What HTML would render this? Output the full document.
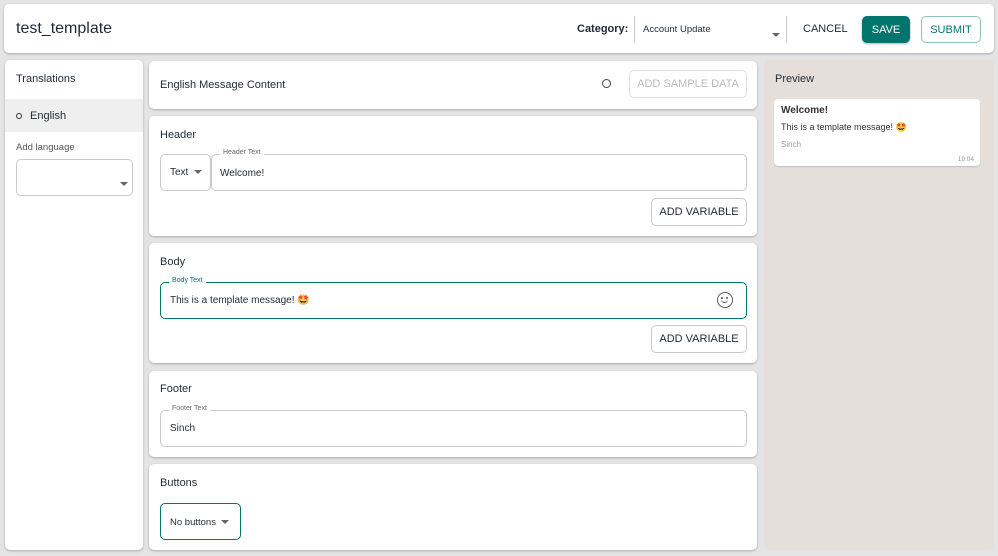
<!DOCTYPE html>
<html><head><style>
*{box-sizing:border-box;margin:0;padding:0}
body{width:998px;height:556px;background:#e4e4e4;font-family:"Liberation Sans",sans-serif;color:#1f2a37;position:relative;overflow:hidden;font-size:11px}
.card{position:absolute;background:#fff;border-radius:5px;box-shadow:0 1px 2px rgba(0,0,0,.25)}
.abs{position:absolute}
.btn{position:absolute;border:1px solid #c9c9c9;border-radius:5px;background:#fff;font-size:11px;display:flex;align-items:center;justify-content:center;color:#1f2a37}
.field{position:absolute;border:1px solid #c9c9c9;border-radius:5px;background:#fff}
.lbl{position:absolute;top:-6px;left:8px;background:#fff;padding:0 3px;font-size:7px;color:#666}
.tri{display:inline-block;width:0;height:0;border-left:4px solid transparent;border-right:4px solid transparent;border-top:4px solid #666}
</style></head><body>
<div class="card" style="left:4px;top:4px;width:990px;height:49px">
 <div class="abs" style="left:12px;top:16px;font-size:16px;color:#1f2a37">test_template</div>
 <div class="abs" style="left:573px;top:19px;font-weight:bold;font-size:11px">Category:</div>
 <div class="abs" style="left:630px;top:12px;width:1px;height:27px;background:#ccc"></div>
 <div class="abs" style="left:639px;top:20px;font-size:9.5px">Account Update</div>
 <div class="abs" style="left:768px;top:24px"><span class="tri"></span></div>
 <div class="abs" style="left:782px;top:12px;width:1px;height:27px;background:#ccc"></div>
 <div class="abs" style="left:799px;top:19px;font-size:11px">CANCEL</div>
 <div class="btn" style="left:858px;top:12px;width:48px;height:27px;background:#00756d;border-color:#00756d;color:#fff;box-shadow:0 1px 2px rgba(0,0,0,.3)">SAVE</div>
 <div class="btn" style="left:917px;top:12px;width:60px;height:27px;border-color:#8fc1bc;color:#00756d">SUBMIT</div>
</div>
<div class="card" style="left:5px;top:60px;width:138px;height:490px">
 <div class="abs" style="left:11px;top:13px;font-size:11px">Translations</div>
 <div class="abs" style="left:0;top:39px;width:138px;height:33px;background:#efefef"></div>
 <div class="abs" style="left:11px;top:53px;width:6px;height:6px;border:1px solid #333;border-radius:50%"></div>
 <div class="abs" style="left:25px;top:50px;font-size:11px">English</div>
 <div class="abs" style="left:11px;top:82px;font-size:9.5px;color:#555">Add language</div>
 <div class="field" style="left:11px;top:99px;width:117px;height:37px"><div class="abs" style="left:103px;top:17px"><span class="tri"></span></div></div>
</div>
<div class="card" style="left:149px;top:61px;width:608px;height:48px">
 <div class="abs" style="left:11px;top:18px;font-size:11px">English Message Content</div>
 <div class="abs" style="left:453px;top:18px;width:9px;height:9px;border:1.5px solid #444;border-radius:50%"></div>
 <div class="btn" style="left:480px;top:9px;width:118px;height:28px;border-color:#e0e0e0;color:#bbb">ADD SAMPLE DATA</div>
</div>
<div class="card" style="left:149px;top:116px;width:608px;height:120px">
 <div class="abs" style="left:11px;top:13px;font-size:11px">Header</div>
 <div class="field" style="left:11px;top:38px;width:51px;height:37px"><div class="abs" style="left:9px;top:12px;font-size:10px">Text <span class="tri" style="margin-left:3px;vertical-align:middle"></span></div></div>
 <div class="field" style="left:62px;top:38px;width:536px;height:37px"><div class="lbl">Header Text</div><div class="abs" style="left:8px;top:13px;font-size:10px">Welcome!</div></div>
 <div class="btn" style="left:502px;top:82px;width:96px;height:28px">ADD VARIABLE</div>
</div>
<div class="card" style="left:149px;top:243px;width:608px;height:120px">
 <div class="abs" style="left:11px;top:13px;font-size:11px">Body</div>
 <div class="field" style="left:11px;top:39px;width:587px;height:37px;border-color:#00756d"><div class="lbl" style="color:#00756d">Body Text</div><div class="abs" style="left:9px;top:12px;font-size:10px">This is a template message! 🤩</div>
 <div class="abs" style="left:556px;top:9px;width:16px;height:16px;border:1.5px solid #555;border-radius:50%"><div class="abs" style="left:3px;top:4px;width:2px;height:2px;background:#555;border-radius:50%"></div><div class="abs" style="left:8px;top:4px;width:2px;height:2px;background:#555;border-radius:50%"></div><div class="abs" style="left:3px;top:6px;width:7px;height:4px;border-bottom:1.5px solid #555;border-radius:0 0 4px 4px"></div></div></div>
 <div class="btn" style="left:502px;top:82px;width:96px;height:28px">ADD VARIABLE</div>
</div>
<div class="card" style="left:149px;top:371px;width:608px;height:86px">
 <div class="abs" style="left:11px;top:12px;font-size:11px">Footer</div>
 <div class="field" style="left:11px;top:39px;width:587px;height:37px"><div class="lbl">Footer Text</div><div class="abs" style="left:9px;top:12px;font-size:10px">Sinch</div></div>
</div>
<div class="card" style="left:149px;top:464px;width:608px;height:86px">
 <div class="abs" style="left:11px;top:13px;font-size:11px">Buttons</div>
 <div class="field" style="left:11px;top:39px;width:81px;height:37px;border-color:#00756d"><div class="abs" style="left:9px;top:13px;font-size:9.5px">No buttons <span class="tri" style="margin-left:2px;vertical-align:middle"></span></div></div>
</div>
<div class="abs" style="left:764px;top:60px;width:230px;height:490px;background:#e6dfd9;border-radius:5px">
 <div class="abs" style="left:11px;top:13px;font-size:11px">Preview</div>
 <div class="abs" style="left:10px;top:39px;width:206px;height:67px;background:#fff;border-radius:4px;box-shadow:0 1px 1px rgba(0,0,0,.15)">
  <div class="abs" style="left:7px;top:6px;font-weight:bold;font-size:10px;color:#333">Welcome!</div>
  <div class="abs" style="left:7px;top:23px;font-size:9px;color:#333">This is a template message! 🤩</div>
  <div class="abs" style="left:7px;top:41px;font-size:8px;color:#999">Sinch</div>
  <div class="abs" style="right:6px;top:57px;font-size:6.5px;color:#999">19:04</div>
 </div>
</div>
</body></html>
